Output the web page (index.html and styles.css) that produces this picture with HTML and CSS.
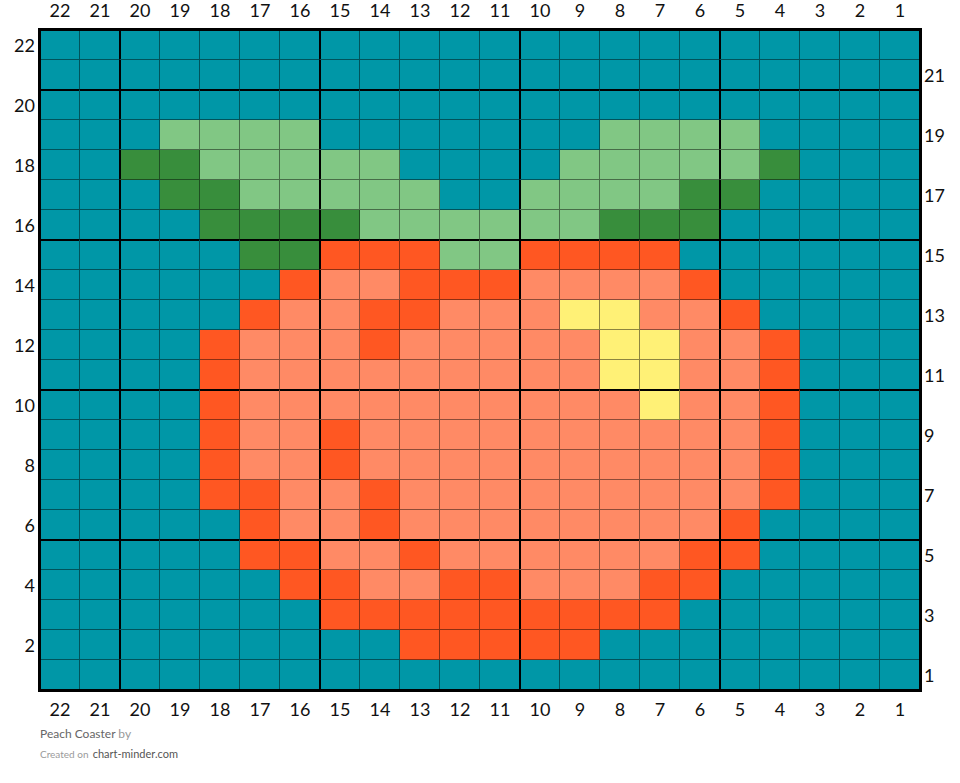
FILE: index.html
```html
<!DOCTYPE html>
<html lang="en">
<head>
<meta charset="utf-8">
<title>Peach Coaster</title>
<link rel="stylesheet" href="styles.css">
</head>
<body>
<div class="chart">
  <div class="corner"></div>
  <div class="cols cols-top">
    <span>22</span><span>21</span><span>20</span><span>19</span><span>18</span><span>17</span><span>16</span><span>15</span><span>14</span><span>13</span><span>12</span><span>11</span><span>10</span><span>9</span><span>8</span><span>7</span><span>6</span><span>5</span><span>4</span><span>3</span><span>2</span><span>1</span>
  </div>
  <div class="corner"></div>
  <div class="rows rows-left">
    <span>22</span><span></span><span>20</span><span></span><span>18</span><span></span><span>16</span><span></span><span>14</span><span></span><span>12</span><span></span><span>10</span><span></span><span>8</span><span></span><span>6</span><span></span><span>4</span><span></span><span>2</span><span></span>
  </div>
  <div class="grid" id="grid"></div>
  <div class="rows rows-right">
    <span></span><span>21</span><span></span><span>19</span><span></span><span>17</span><span></span><span>15</span><span></span><span>13</span><span></span><span>11</span><span></span><span>9</span><span></span><span>7</span><span></span><span>5</span><span></span><span>3</span><span></span><span>1</span>
  </div>
  <div class="corner"></div>
  <div class="cols cols-bottom">
    <span>22</span><span>21</span><span>20</span><span>19</span><span>18</span><span>17</span><span>16</span><span>15</span><span>14</span><span>13</span><span>12</span><span>11</span><span>10</span><span>9</span><span>8</span><span>7</span><span>6</span><span>5</span><span>4</span><span>3</span><span>2</span><span>1</span>
  </div>
  <div class="corner"></div>
</div>
<div class="footer">
  <div class="title-line"><span class="title">Peach Coaster</span> <span class="by">by</span></div>
  <div class="credit-line"><span class="created">Created on</span> <span class="site">chart-minder.com</span></div>
</div>
<script src="script.js"></script>
</body>
</html>
```
FILE: styles.css
```css
html, body {
  margin: 0;
  padding: 0;
  background: #fff;
}
body {
  font-family: Lato, "Open Sans", "Liberation Sans", sans-serif;
  color: #111;
}
.chart {
  display: grid;
  grid-template-columns: 40px 880px 40px;
  grid-template-rows: 30px 660px 30px;
}
.cols {
  display: grid;
  grid-template-columns: repeat(22, 40px);
  font-size: 18px;
  line-height: 20px;
  text-align: center;
}
.cols-bottom span {
  padding-top: 9px;
}
.rows {
  display: grid;
  grid-template-rows: repeat(22, 30px);
  font-size: 18px;
  line-height: 30px;
}
.rows-left {
  text-align: right;
  padding-right: 5px;
}
.rows-right {
  text-align: left;
  padding-left: 4px;
}
.grid {
  display: grid;
  grid-template-columns: repeat(22, 40px);
  grid-template-rows: repeat(22, 30px);
  outline: 3px solid #000;
  outline-offset: -1px;
  position: relative;
  z-index: 1;
}
.cell {
  box-sizing: border-box;
  border-right: 1px solid rgba(0, 0, 0, 0.45);
  border-bottom: 1px solid rgba(0, 0, 0, 0.45);
}
.cell.br { border-right-color: #000; }
.cell.bb { border-bottom-color: #000; }
.cell.sl { box-shadow: inset 1px 0 #000; }
.cell.st { box-shadow: inset 0 1px #000; }
.cell.sl.st { box-shadow: inset 1px 0 #000, inset 0 1px #000; }
.c-T { background: #0097a7; }
.c-L { background: #81c784; }
.c-D { background: #388e3c; }
.c-O { background: #ff5722; }
.c-P { background: #ff8a65; }
.c-Y { background: #fff176; }
.footer {
  padding: 6px 0 0 40px;
}
.title-line {
  font-size: 12px;
  line-height: 16px;
}
.title { color: #666; }
.by { color: #999; }
.credit-line {
  line-height: 20px;
}
.created {
  font-size: 10px;
  color: #9a9a9a;
}
.site {
  font-size: 11px;
  color: #555;
}
```
FILE: script.js
```js
(function () {
  var rows = [
    "TTTTTTTTTTTTTTTTTTTTTT",
    "TTTTTTTTTTTTTTTTTTTTTT",
    "TTTTTTTTTTTTTTTTTTTTTT",
    "TTTLLLLTTTTTTTLLLLTTTT",
    "TTDDLLLLLTTTTLLLLLDTTT",
    "TTTDDLLLLLTTLLLLDDTTTT",
    "TTTTDDDDLLLLLLDDDTTTTT",
    "TTTTTDDOOOLLOOOOTTTTTT",
    "TTTTTTOPPOOOPPPPOTTTTT",
    "TTTTTOPPOOPPPYYPPOTTTT",
    "TTTTOPPPOPPPPPYYPPOTTT",
    "TTTTOPPPPPPPPPYYPPOTTT",
    "TTTTOPPPPPPPPPPYPPOTTT",
    "TTTTOPPOPPPPPPPPPPOTTT",
    "TTTTOPPOPPPPPPPPPPOTTT",
    "TTTTOOPPOPPPPPPPPPOTTT",
    "TTTTTOPPOPPPPPPPPOTTTT",
    "TTTTTOOPPOPPPPPPOOTTTT",
    "TTTTTTOOPPOOPPPOOTTTTT",
    "TTTTTTTOOOOOOOOOTTTTTT",
    "TTTTTTTTTOOOOOTTTTTTTT",
    "TTTTTTTTTTTTTTTTTTTTTT"
  ];
  var thickBefore = [1, 6, 11, 16];
  var thickAfter = [2, 7, 12, 17];
  var grid = document.getElementById("grid");
  var frag = document.createDocumentFragment();
  for (var r = 0; r < rows.length; r++) {
    for (var c = 0; c < 22; c++) {
      var d = document.createElement("div");
      var cls = "cell c-" + rows[r].charAt(c);
      if (thickBefore.indexOf(c) >= 0) cls += " br";
      if (thickAfter.indexOf(c) >= 0) cls += " sl";
      if (thickBefore.indexOf(r) >= 0) cls += " bb";
      if (thickAfter.indexOf(r) >= 0) cls += " st";
      d.className = cls;
      frag.appendChild(d);
    }
  }
  grid.appendChild(frag);
})();
```
